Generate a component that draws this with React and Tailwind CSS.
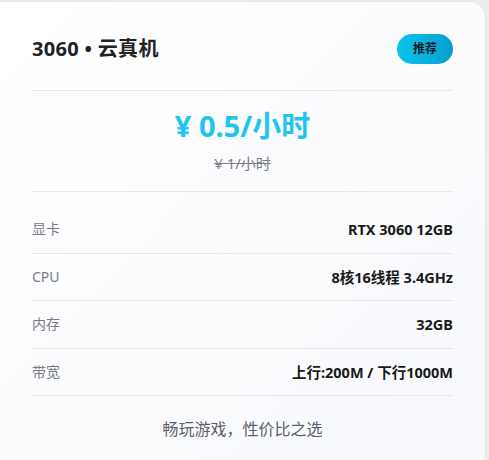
export default function App() {
    const specs = [
        { label: "显卡", value: "RTX 3060 12GB" },
        { label: "CPU", value: "8核16线程 3.4GHz" },
        { label: "内存", value: "32GB" },
        { label: "带宽", value: "上行:200M / 下行1000M" },
    ];

    return (
        <div
            className="w-[489px] h-[460px] overflow-hidden bg-[#ececec]"
            style={{ fontFamily: '"Noto Sans", "Noto Sans CJK SC", sans-serif' }}
        >
            <div className="w-[486px] min-h-[500px] mt-px rounded-tr-2xl border-t border-r border-[#e3e5ea] bg-gradient-to-br from-white to-[#f7f8fc] px-8 pt-8">
                {/* Header */}
                <div className="flex items-center justify-between pb-[26px] border-b border-[#e6e8ec]">
                    <h2 className="text-[20px] leading-[30px] font-bold text-[#222] tracking-[0.3px]">3060 • 云真机</h2>
                    <span className="h-[30px] px-4 flex items-center rounded-full bg-gradient-to-r from-[#0cc4ea] to-[#069fd2] text-[12px] font-bold text-[#1a1a1a]">
                        推荐
                    </span>
                </div>

                {/* Price */}
                <div className="flex flex-col items-center pt-[16px] pb-[17px] border-b border-[#e6e8ec]">
                    <div className="text-[29px] leading-[37px] font-bold text-[#1ec6ee]">¥ 0.5/小时</div>
                    <div className="mt-[9px] text-[15px] leading-[21px] text-[#7a7f88] line-through">¥ 1/小时</div>
                </div>

                {/* Specs */}
                <div className="mt-[14px]">
                    {specs.map((s) => (
                        <div
                            key={s.label}
                            className="flex items-center justify-between py-[13px] border-b border-[#e6e8ec] text-[14px] leading-[20.5px]"
                        >
                            <span className="text-[#777c85]">{s.label}</span>
                            <span className="font-bold text-[#1a1a1a] text-[14.5px]">{s.value}</span>
                        </div>
                    ))}
                </div>

                <p className="mt-[22px] text-center text-[16px] leading-[22px] text-[#5a5f68]">畅玩游戏，性价比之选</p>
            </div>
        </div>
    );
}
